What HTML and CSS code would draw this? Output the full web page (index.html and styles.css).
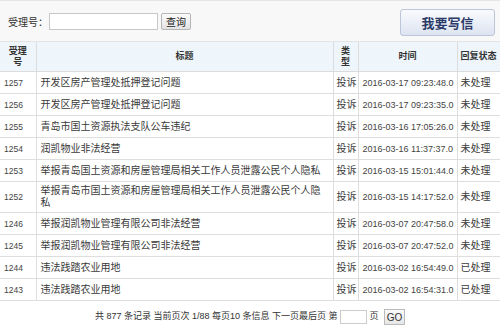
FILE: index.html
```html
<!DOCTYPE html>
<html>
<head>
    <title>信件列表</title>
    <link rel="stylesheet" href="styles.css">
</head>
<body>
    <div class="topbar">
        <div class="search">
            <span class="search-label">受理号：</span>
            <input type="text" class="search-input">
            <button class="search-btn">查询</button>
        </div>
        <button class="write-btn">我要写信</button>
    </div>

    <table class="letters">
        <colgroup>
            <col class="c-id">
            <col class="c-title">
            <col class="c-type">
            <col class="c-time">
            <col class="c-state">
        </colgroup>
        <thead>
            <tr>
                <th>受理<br>号</th>
                <th>标题</th>
                <th>类<br>型</th>
                <th>时间</th>
                <th class="left">回复状态</th>
            </tr>
        </thead>
        <tbody>
            <tr><td class="id">1257</td><td class="title">开发区房产管理处抵押登记问题</td><td>投诉</td><td class="time">2016-03-17 09:23:48.0</td><td>未处理</td></tr>
            <tr><td class="id">1256</td><td class="title">开发区房产管理处抵押登记问题</td><td>投诉</td><td class="time">2016-03-17 09:23:35.0</td><td>未处理</td></tr>
            <tr><td class="id">1255</td><td class="title">青岛市国土资源执法支队公车违纪</td><td>投诉</td><td class="time">2016-03-16 17:05:26.0</td><td>未处理</td></tr>
            <tr><td class="id">1254</td><td class="title">润凯物业非法经营</td><td>投诉</td><td class="time">2016-03-16 11:37:37.0</td><td>未处理</td></tr>
            <tr><td class="id">1253</td><td class="title">举报青岛国土资源和房屋管理局相关工作人员泄露公民个人隐私</td><td>投诉</td><td class="time">2016-03-15 15:01:44.0</td><td>未处理</td></tr>
            <tr class="tall"><td class="id">1252</td><td class="title">举报青岛市国土资源和房屋管理局相关工作人员泄露公民个人隐私</td><td>投诉</td><td class="time">2016-03-15 14:17:52.0</td><td>未处理</td></tr>
            <tr><td class="id">1246</td><td class="title">举报润凯物业管理有限公司非法经营</td><td>投诉</td><td class="time">2016-03-07 20:47:58.0</td><td>未处理</td></tr>
            <tr><td class="id">1245</td><td class="title">举报润凯物业管理有限公司非法经营</td><td>投诉</td><td class="time">2016-03-07 20:47:52.0</td><td>未处理</td></tr>
            <tr><td class="id">1244</td><td class="title">违法践踏农业用地</td><td>投诉</td><td class="time">2016-03-02 16:54:49.0</td><td>已处理</td></tr>
            <tr><td class="id">1243</td><td class="title">违法践踏农业用地</td><td>投诉</td><td class="time">2016-03-02 16:54:31.0</td><td>已处理</td></tr>
        </tbody>
    </table>

    <div class="pager">
        共 877 条记录 当前页次 1/88 每页10 条信息 下一页最后页 第
        <input type="text" class="page-input"> 页
        <button class="go-btn">GO</button>
    </div>
</body>
</html>
```

FILE: styles.css
```css
body {
    margin: 0;
    width: 500px;
    background: #fff;
    font-family: "Liberation Sans", "Noto Sans CJK SC", sans-serif;
    font-size: 10px;
    color: #3a3a3a;
}

.topbar {
    height: 40px;
    border-top: 1px solid #e6e6e6;
    border-bottom: 1px solid #e3e3e3;
    background: #f8f8f8;
    display: flex;
    align-items: center;
    justify-content: space-between;
    padding: 0 5px 0 8px;
}

.search {
    display: flex;
    align-items: center;
}

.search-label {
    font-size: 10px;
    color: #333;
}

.search-input {
    width: 109px;
    height: 17px;
    box-sizing: border-box;
    border: 1px solid #c8c8c8;
    background: #fff;
    margin: 0 3px 0 1px;
    padding: 0;
}

.search-btn {
    height: 17px;
    width: 30px;
    padding: 0;
    font-family: inherit;
    font-size: 10px;
    color: #222;
    border: 1px solid #b5b5b5;
    border-radius: 2px;
    background: linear-gradient(#fbfbfb, #e4e4e4);
}

.write-btn {
    width: 95px;
    height: 27px;
    margin-top: 2px;
    padding: 0;
    font-family: inherit;
    font-size: 13px;
    font-weight: bold;
    color: #2b3a68;
    border: 1px solid #bcc6d8;
    border-radius: 3px;
    background: linear-gradient(#f9fafd, #dde4f1);
}

.letters {
    width: 500px;
    border-collapse: collapse;
    table-layout: fixed;
}

.c-id { width: 36px; }
.c-title { width: 297px; }
.c-type { width: 25px; }
.c-time { width: 99px; }
.c-state { width: 43px; }

.letters th {
    height: 29px;
    background: #eef5fb;
    border: 1px solid #dcdcdc;
    border-top: none;
    font-size: 9px;
    line-height: 11px;
    color: #333;
    padding: 0 2px;
    text-align: center;
}

.letters th.left {
    text-align: left;
    padding-left: 3px;
}

.letters td {
    height: 21px;
    border: 1px solid #dedede;
    padding: 0 2px 0 3px;
    font-size: 10px;
    line-height: 12px;
    color: #3a3a3a;
    white-space: nowrap;
}

.letters td.id {
    font-size: 8.5px;
    color: #444;
    padding-left: 4px;
}

.letters td.title {
    white-space: normal;
    padding: 0 5px 0 4px;
}

.letters td.time {
    font-size: 9px;
    color: #444;
    padding-left: 4px;
}

.letters tr.tall td {
    height: 30px;
}

.letters tr:first-child td {
    border-top: none;
}

.letters td:first-child,
.letters th:first-child {
    border-left: none;
}

.letters td:last-child,
.letters th:last-child {
    border-right: none;
}

.pager {
    text-align: center;
    padding-top: 8px;
    font-size: 9px;
    color: #333;
    white-space: nowrap;
}

.page-input {
    width: 27px;
    height: 14px;
    box-sizing: border-box;
    border: 1px solid #ccc;
    vertical-align: middle;
    padding: 0;
}

.go-btn {
    height: 16px;
    width: 21px;
    margin-left: 3px;
    padding: 0;
    font-family: inherit;
    font-size: 10px;
    color: #333;
    border: 1px solid #bbb;
    background: linear-gradient(#fafafa, #e6e6e6);
    vertical-align: middle;
}
```
